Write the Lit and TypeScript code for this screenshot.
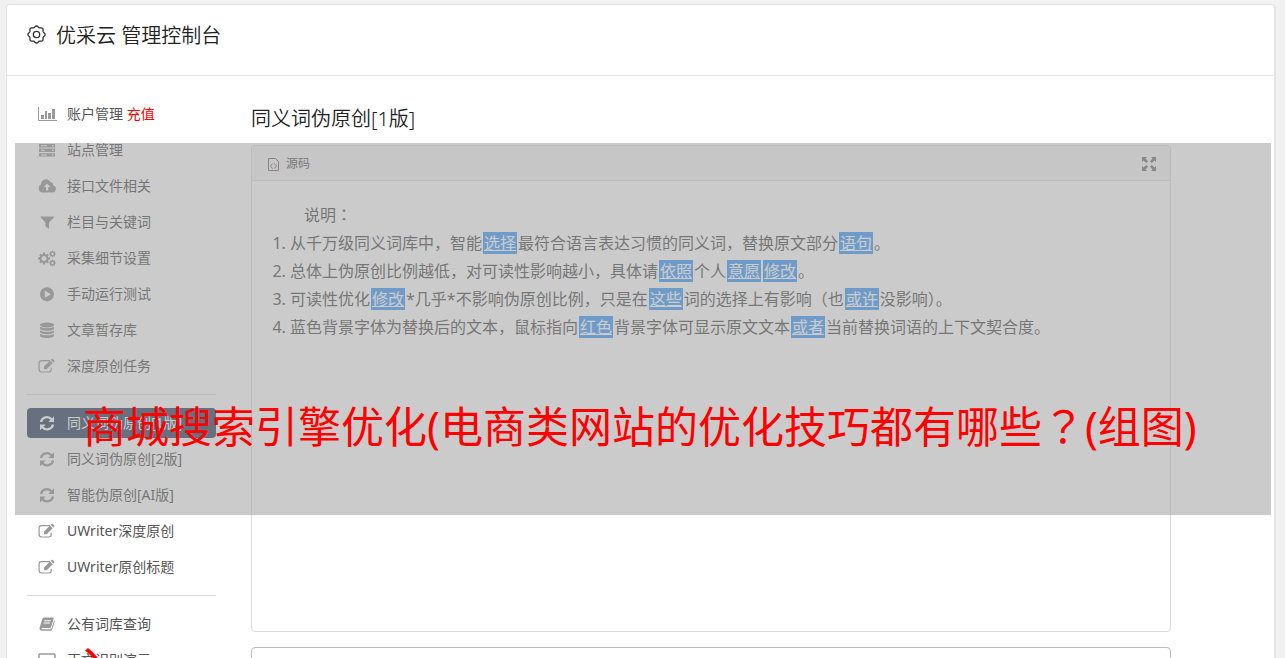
import { LitElement, html, svg, css, TemplateResult } from "lit";
import { customElement } from "lit/decorators.js";
import { classMap } from "lit/directives/class-map.js";

interface NavItem {
  icon: string;
  label: string;
  badge?: string;
  active?: boolean;
}

const navGroups: NavItem[][] = [
  [
    { icon: "chart", label: "账户管理", badge: "充值" },
    { icon: "server", label: "站点管理" },
    { icon: "cloud", label: "接口文件相关" },
    { icon: "filter", label: "栏目与关键词" },
    { icon: "cogs", label: "采集细节设置" },
    { icon: "play", label: "手动运行测试" },
    { icon: "database", label: "文章暂存库" },
    { icon: "edit", label: "深度原创任务" },
  ],
  [
    { icon: "refresh", label: "同义词伪原创[1版]", active: true },
    { icon: "refresh", label: "同义词伪原创[2版]" },
    { icon: "refresh", label: "智能伪原创[AI版]" },
    { icon: "edit", label: "UWriter深度原创" },
    { icon: "edit", label: "UWriter原创标题" },
  ],
  [
    { icon: "book", label: "公有词库查询" },
    { icon: "laptop", label: "正文识别演示" },
  ],
];

// Even entries are plain text, odd entries are replaced words.
const notes: string[][] = [
  ["从千万级同义词库中，智能", "选择", "最符合语言表达习惯的同义词，替换原文部分", "语句", "。"],
  ["总体上伪原创比例越低，对可读性影响越小，具体请", "依照", "个人", "意愿", "", "修改", "。"],
  ["可读性优化", "修改", "*几乎*不影响伪原创比例，只是在", "这些", "词的选择上有影响（也", "或许", "没影响）。"],
  ["蓝色背景字体为替换后的文本，鼠标指向", "红色", "背景字体可显示原文文本", "或者", "当前替换词语的上下文契合度。"],
];

const gearPath = (cx: number, cy: number, r: number, teeth: number, depth: number): string => {
  const points: string[] = [];
  for (let i = 0; i < teeth; i++) {
    const base = (i / teeth) * Math.PI * 2;
    const step = (Math.PI * 2) / teeth;
    const at = (radius: number, t: number) =>
      `${(cx + radius * Math.cos(base + t * step)).toFixed(2)} ${(cy + radius * Math.sin(base + t * step)).toFixed(2)}`;
    points.push(at(r - depth, -0.34), at(r, -0.2), at(r, 0.2), at(r - depth, 0.34));
  }
  return `M${points.join("L")}Z`;
};

// Outline of the soft-edged gear in the header.
const wavyPath = (cx: number, cy: number, r: number, waves: number, depth: number): string => {
  const points: string[] = [];
  for (let i = 0; i < 96; i++) {
    const a = (i / 96) * Math.PI * 2;
    const radius = r + depth * Math.cos(a * waves);
    points.push(`${(cx + radius * Math.cos(a)).toFixed(2)} ${(cy + radius * Math.sin(a)).toFixed(2)}`);
  }
  return `M${points.join("L")}Z`;
};

const glyphs: Record<string, TemplateResult> = {
  chart: svg`<path d="M0.5 1v13.5H19" fill="none" stroke="currentColor"/>
    <path d="M3 9h3v4H3zM7 5h2v8H7zM10 7h3v6h-3zM14 3h3v10h-3z" fill="currentColor"/>`,
  server: svg`<path fill-rule="evenodd" fill="currentColor" d="M1 2h16v3.4H1zM1 6.6h16V10H1zM1 11.2h16v3.4H1zM3 3.2v1h6v-1zM3 7.8v1h4v-1zM3 12.4v1h6v-1zM14 3v1.4h1.4V3zM14 7.6V9h1.4V7.6zM14 12.2v1.4h1.4v-1.4z"/>`,
  cloud: svg`<path fill-rule="evenodd" fill="currentColor" d="M4.5 14.5A4.3 4.3 0 0 1 3 6.4 5 5 0 0 1 12.4 4a2.6 2.6 0 0 1 2.6 3.2 3.7 3.7 0 0 1-.8 7.3zM8 12.5h2.2V9h2.2L9 5.4 5.8 9H8z"/>`,
  filter: svg`<path fill="currentColor" d="M3 2.5h12.4c.5 0 .7.6.4 1L11 8.6v6.2L7.4 12.4V8.6L2.6 3.5c-.3-.4-.1-1 .4-1z"/>`,
  cogs: svg`<path fill-rule="evenodd" fill="currentColor" d="${gearPath(6, 8.5, 6, 8, 1.5)}M6 6.1a2.4 2.4 0 1 0 .01 0z"/>
    <path fill-rule="evenodd" fill="currentColor" d="${gearPath(14.5, 4, 3.4, 8, 0.9)}M14.5 2.8a1.2 1.2 0 1 0 .01 0z"/>
    <path fill-rule="evenodd" fill="currentColor" d="${gearPath(14.5, 13, 3.4, 8, 0.9)}M14.5 11.8a1.2 1.2 0 1 0 .01 0z"/>`,
  play: svg`<path fill-rule="evenodd" fill="currentColor" d="M9 1.3a7 7 0 1 0 .01 0zM6.8 4.6l6 3.7-6 3.7z"/>`,
  database: svg`<ellipse cx="9" cy="3" rx="7" ry="2.4" fill="currentColor"/>
    <path fill="currentColor" d="M2 4.8c2.2 1.8 11.8 1.8 14 0v1.7c0 3-14 3-14 0zM2 8.4c2.2 1.8 11.8 1.8 14 0v1.7c0 3-14 3-14 0zM2 12c2.2 1.8 11.8 1.8 14 0v1.7c0 3-14 3-14 0z"/>`,
  edit: svg`<path fill="none" stroke="currentColor" stroke-width="1.2" d="M12 2.7H3.5A2.4 2.4 0 0 0 1.1 5.1v6.5A2.4 2.4 0 0 0 3.5 14h7.3a2.4 2.4 0 0 0 2.4-2.4V9.7"/>
    <path fill="currentColor" d="M6 8.5l6-6 2.7 2.7-6 6H6zM12.7 1.8l.9-.8q.6-.5 1.2 0l1.5 1.5q.5.6 0 1.2l-.9.8z"/>`,
  refresh: svg`<path fill="none" stroke="currentColor" stroke-width="2.3" d="M3 7A6 6 0 0 1 13.5 4.3M15 9.5A6 6 0 0 1 4.5 12.2"/>
    <path fill="currentColor" d="M16 1.3V7h-5.7zM2 15.2V9.5h5.7z"/>`,
  book: svg`<path fill-rule="evenodd" fill="currentColor" d="M6.2 1.5h8.3c.9 0 1.4.7 1.1 1.6L13 11.2c-.2.6-.6.9-1.3.9H4.2c-1 0-1 1.2.2 1.2h8c.6 0 .9-.3 1.1-.8l2.6-8c.9.4.7 1 .5 1.7l-2.5 7.6c-.2.7-.8 1-1.5 1H4c-1.8 0-2.9-1.5-2.4-3L4.3 3c.3-.9 1-1.5 1.9-1.5zM6.6 4.2l-.3 1h6.2l.3-1zM5.9 6.5l-.3 1h6.2l.3-1z"/>`,
  laptop: svg`<rect x="1" y="2" width="16" height="11" rx="1" fill="none" stroke="currentColor" stroke-width="1.5"/><path d="M0 15h18" stroke="currentColor"/>`,
};

const icon = (name: string) => html`<svg class="icon" viewBox="0 0 18 16" aria-hidden="true">${glyphs[name]}</svg>`;

@customElement("app-root")
export class AppRoot extends LitElement {
  static styles = css`
    :host {
      display: block;
      position: relative;
      box-sizing: border-box;
      height: 100vh;
      overflow: hidden;
      padding: 4px 9px 0 6px;
      background: #f1f1f1;
      color: #555;
      font: 14px/20px "Noto Sans", "Noto Sans CJK SC", sans-serif;
    }
    .panel {
      min-height: 100vh;
      background: #fff;
      border: 1px solid #e4e4e4;
      border-right-width: 2px;
      border-radius: 4px;
    }
    .top {
      display: flex;
      align-items: center;
      gap: 10px;
      height: 71px;
      box-sizing: border-box;
      padding: 0 20px 8px;
      border-bottom: 1px solid #e4e4e4;
      color: #333;
    }
    .gear {
      width: 19px;
      height: 19px;
      margin-bottom: 4px;
    }
    h1,
    h2 {
      margin: 0;
      font-size: 20px;
      line-height: 28px;
      font-weight: 350;
      color: #222;
    }
    .body {
      display: grid;
      grid-template-columns: 189px minmax(0, 920px);
      column-gap: 35px;
      padding: 23px 20px 0;
    }
    ul {
      list-style: none;
      margin: 0;
      padding: 0;
    }
    .group {
      display: grid;
      gap: 6px;
    }
    .group + .group {
      margin-top: 13px;
      padding-top: 13px;
      border-top: 1px solid #ddd;
    }
    .link {
      display: flex;
      align-items: center;
      gap: 11px;
      height: 30px;
      padding: 0 11px;
      border-radius: 4px;
      color: inherit;
      text-decoration: none;
      white-space: nowrap;
    }
    .link .icon {
      color: #999;
    }
    .icon {
      flex: none;
      width: 18px;
      height: 16px;
      overflow: visible;
    }
    .link.active {
      background: #354967;
      color: #fff;
    }
    .link.active .icon {
      color: #fff;
    }
    .badge {
      color: #f00;
    }
    .main h2 {
      padding-top: 6px;
      margin-bottom: 12px;
    }
    .editor {
      box-sizing: border-box;
      height: 487px;
      border: 1px solid #ddd;
      border-radius: 4px;
    }
    .toolbar {
      display: flex;
      align-items: center;
      justify-content: space-between;
      height: 34px;
      padding: 2px 13px 0 15px;
      box-sizing: border-box;
      background: #f5f5f5;
      border-radius: 4px 4px 0 0;
    }
    .tool {
      display: flex;
      align-items: center;
      gap: 6px;
      padding: 0;
      border: 0;
      background: none;
      color: #555;
      font: inherit;
      font-size: 12px;
    }
    .source {
      width: 13px;
      height: 16px;
    }
    .expand {
      width: 16px;
      height: 16px;
    }
    .content {
      padding: 20px;
      border-top: 1px solid #ddd;
      font-size: 16px;
      line-height: 28px;
    }
    .content p {
      margin: 0;
      text-indent: 32px;
    }
    .content ol {
      margin: 0;
      padding-left: 18px;
    }
    .centered {
      font-family: "Noto Sans CJK TC", sans-serif;
      line-height: 1;
    }
    .word {
      margin: 0 1px;
      border: solid #479ffb;
      border-width: 0 1px;
      background: #479ffb;
      color: #fff;
      text-decoration: underline;
    }
    .next {
      display: block;
      width: 100%;
      height: 80px;
      box-sizing: border-box;
      margin-top: 15px;
      border: 1px solid #bbb;
      border-radius: 4px;
      resize: none;
    }
    .veil {
      position: absolute;
      top: 143px;
      left: 15px;
      right: 14px;
      height: 372px;
      background: rgba(151, 151, 151, 0.5);
    }
    .caption {
      position: absolute;
      top: 395px;
      left: 83px;
      color: #f00;
      font-size: 43px;
      line-height: 64px;
      white-space: nowrap;
    }
    .tail {
      top: 609px;
    }
  `;

  private renderLink(item: NavItem) {
    return html`<li>
      <a class=${classMap({ link: true, active: !!item.active })} href="#">
        ${icon(item.icon)}
        <span>${item.label}${item.badge ? html` <span class="badge">${item.badge}</span>` : null}</span>
      </a>
    </li>`;
  }

  private renderNote(parts: string[]) {
    return html`<li>${parts.map((part, i) => (i % 2 ? html`<span class="word">${part}</span>` : part))}</li>`;
  }

  render() {
    return html`
      <div class="panel">
        <header class="top">
          <svg class="gear" viewBox="0 0 19 19" fill="none" stroke="currentColor" stroke-width="1.3" aria-hidden="true">
            <path stroke-linejoin="round" d=${wavyPath(9.5, 9.5, 7.9, 8, 0.7)} />
            <circle cx="9.5" cy="9.5" r="3.2" />
          </svg>
          <h1>优采云 管理控制台</h1>
        </header>
        <div class="body">
          <nav>${navGroups.map((group) => html`<ul class="group">${group.map((item) => this.renderLink(item))}</ul>`)}</nav>
          <main class="main">
            <h2>同义词伪原创[1版]</h2>
            <section class="editor">
              <div class="toolbar">
                <button class="tool" type="button">
                  <svg class="source" viewBox="0 0 13 16" fill="none" stroke="#777" aria-hidden="true">
                    <path d="M1.5 2.5h7l3 3v9h-10zM5.5 7.5l-2 2.5 2 2.5M7.5 7.5l2 2.5-2 2.5" />
                  </svg>
                  源码
                </button>
                <button class="tool" type="button" aria-label="全屏">
                  <svg class="expand" viewBox="0 0 16 16" aria-hidden="true">
                    <path fill="#777" d="M1 1h5L4.4 2.6l2.6 2.6-1.8 1.8-2.6-2.6L1 6zM15 1v5l-1.6-1.6-2.6 2.6L9 5.2l2.6-2.6L10 1zM1 15v-5l1.6 1.6 2.6-2.6L7 10.8l-2.6 2.6L6 15zM15 15h-5l1.6-1.6L9 10.8 10.8 9l2.6 2.6L15 10z" />
                  </svg>
                </button>
              </div>
              <div class="content">
                <p>说明<span class="centered">：</span></p>
                <ol>${notes.map((parts) => this.renderNote(parts))}</ol>
              </div>
            </section>
            <textarea class="next" aria-label="原文"></textarea>
          </main>
        </div>
      </div>
      <div class="veil"></div>
      <div class="caption">商城搜索引擎优化(电商类网站的优化技巧都有哪些<span class="centered">？</span>(组图)</div>
      <div class="caption tail">、</div>
    `;
  }
}
